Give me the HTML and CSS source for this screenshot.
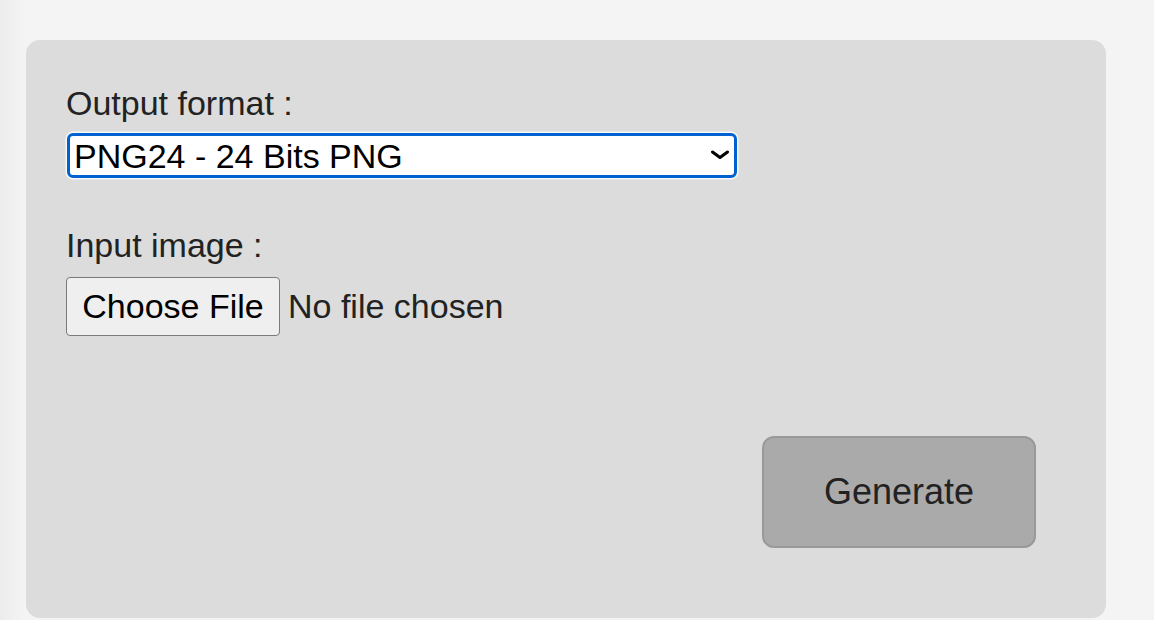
FILE: index.html
```html
<!DOCTYPE html>
<html>
<head>
<meta charset="utf-8">
<link rel="stylesheet" href="styles.css">
</head>
<body>
<div class="page">
  <form class="panel">
    <label class="label" for="fmt">Output format :</label>
    <div class="select-wrap">
      <select id="fmt" class="select">
        <option>PNG24 - 24 Bits PNG</option>
      </select>
      <svg class="chevron" width="20" height="10" viewBox="0 0 20 10"><path d="M2.5 2 L10 7.5 L17.5 2" fill="none" stroke="#000" stroke-width="3" stroke-linecap="round" stroke-linejoin="round"/></svg>
    </div>
    <label class="label label-2" for="img">Input image :</label>
    <div class="file-row">
      <span class="file-btn">Choose File</span>
      <span class="file-text">No file chosen</span>
    </div>
    <div class="actions">
      <button type="button" class="generate">Generate</button>
    </div>
  </form>
</div>
</body>
</html>
```

FILE: styles.css
```css
html, body {
  margin: 0;
  padding: 0;
}
body {
  background: #f4f4f4;
  font-family: "Liberation Sans", Arial, sans-serif;
  width: 1154px;
  height: 620px;
  overflow: hidden;
}
.page {
  padding: 40px 0 0 26px;
  background: linear-gradient(to right, #ececec 0px, #f3f3f3 20px, #f4f4f4 26px);
  height: 580px;
}
.panel {
  width: 1080px;
  height: 578px;
  box-sizing: border-box;
  background: #dcdcdc;
  border-radius: 14px;
  padding: 43px 40px 0 40px;
  display: flex;
  flex-direction: column;
  align-items: flex-start;
}
.label {
  display: block;
  font-size: 34px;
  line-height: 40px;
  color: #222;
}
.label-2 {
  margin-top: 47px;
}
.select-wrap {
  position: relative;
  margin-top: 10px;
  margin-left: 1px;
  width: 670px;
}
.select {
  -webkit-appearance: none;
  appearance: none;
  display: block;
  width: 670px;
  height: 45px;
  box-sizing: border-box;
  font-family: "Liberation Sans", Arial, sans-serif;
  font-size: 34px;
  color: #000;
  background: #fff;
  border: 3px solid #0062d1;
  border-radius: 6px;
  padding: 0 0 0 4px;
  outline: none;
  box-shadow: 0 0 0 1.5px #f8f8f8;
}
.chevron {
  position: absolute;
  right: 7px;
  top: 17px;
}
.file-row {
  display: flex;
  align-items: center;
  gap: 8px;
  margin-top: 12px;
}
.file-btn {
  display: inline-flex;
  align-items: center;
  justify-content: center;
  box-sizing: border-box;
  width: 214px;
  height: 59px;
  background: #efefef;
  border: 1.5px solid #7a7a7a;
  border-radius: 4px;
  font-size: 34px;
  color: #000;
}
.file-text {
  font-size: 34px;
  color: #222;
}
.actions {
  align-self: stretch;
  display: flex;
  justify-content: flex-end;
  padding-right: 30px;
  margin-top: 100px;
}
.generate {
  width: 274px;
  height: 112px;
  box-sizing: border-box;
  background: #aaaaaa;
  border: 2px solid #999;
  border-radius: 12px;
  font-family: "Liberation Sans", Arial, sans-serif;
  font-size: 36px;
  color: #222;
}
```
